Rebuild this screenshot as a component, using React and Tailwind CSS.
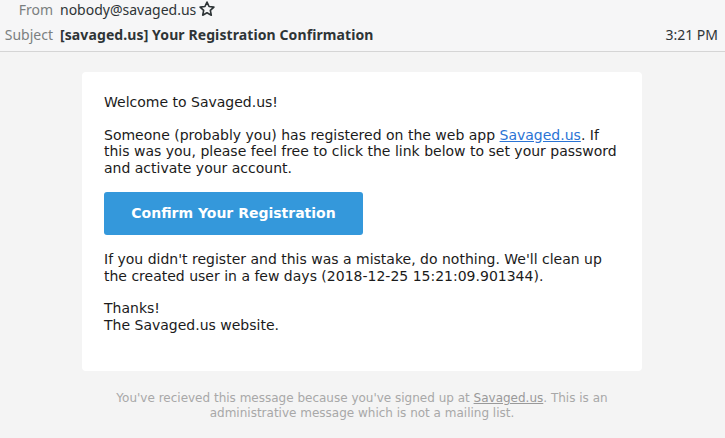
import React from 'react';

const Star = () => (
  <svg width="18" height="18" viewBox="0 0 24 24" fill="none" stroke="#2e3436" strokeWidth="2.2" strokeLinejoin="round">
    <path d="M12 2.8l2.75 5.9 6.45.75-4.78 4.4 1.3 6.37L12 17.03l-5.72 3.2 1.3-6.37L2.8 9.45l6.45-.75z" />
  </svg>
);

const App = () => {
  return (
    <div className="w-[725px] h-[438px] overflow-hidden bg-[#f4f4f4]">
      {/* header */}
      <div className="h-[52px] bg-[#f6f6f7] border-b border-[#d5d5d5] pl-[3px] pr-[7px] text-[14px] text-[#2e3436] font-['Noto_Sans',sans-serif]">
        <div className="flex items-center h-[19px]">
          <span className="w-[50px] text-right text-[#7b7f80]">From</span>
          <span className="ml-[7px]">nobody@savaged.us</span>
          <span className="ml-[2px] mt-[-1px]"><Star /></span>
        </div>
        <div className="flex items-center h-[32px] pb-[2px]">
          <span className="w-[50px] text-right text-[#7b7f80]">Subject</span>
          <span className="ml-[7px] font-bold tracking-[0.1px]">[savaged.us] Your Registration Confirmation</span>
          <span className="ml-auto">3:21 PM</span>
        </div>
      </div>

      {/* body */}
      <div className="pt-[20px] pl-[82px] font-['DejaVu_Sans',sans-serif]">
        <div className="w-[560px] bg-white rounded-[4px] px-[22px] pt-[22px] pb-[22px] text-[14px] leading-[16.5px] text-[#1b1b1b]">
          <p>Welcome to Savaged.us!</p>
          <p className="mt-[16px]">
            Someone (probably you) has registered on the web app{' '}
            <a href="#" className="text-[#2a74d5] underline">Savaged.us</a>. If this was you, please feel free to click the link below to set your password and activate your account.
          </p>
          <div className="mt-[16px] w-[259px] h-[43px] bg-[#3498db] rounded-[3px] flex items-center justify-center text-white font-bold">
            Confirm Your Registration
          </div>
          <p className="mt-[16px]">
            If you didn't register and this was a mistake, do nothing. We'll clean up the created user in a few days (2018-12-25 15:21:09.901344).
          </p>
          <p className="mt-[16px]">Thanks!<br />The Savaged.us website.</p>
          <div className="h-[16px]" />
        </div>
        <div className="w-[560px] px-[22px] mt-[20px] text-center text-[12px] leading-[15px] text-[#a8a8a8]">
          You've recieved this message because you've signed up at{' '}
          <a href="#" className="underline text-[#999]">Savaged.us</a>. This is an administrative message which is not a mailing list.
        </div>
      </div>
    </div>
  );
};

export default App;
